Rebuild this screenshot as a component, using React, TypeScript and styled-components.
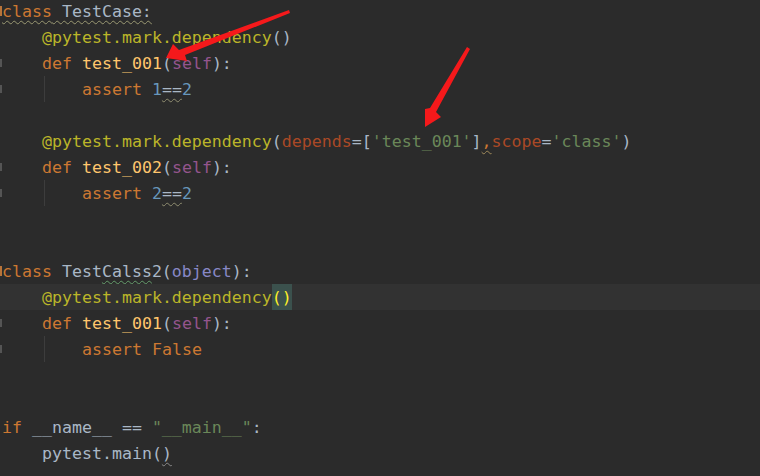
import React from 'react';
import styled, { createGlobalStyle, css } from 'styled-components';

const GlobalStyle = createGlobalStyle`
    html, body {
        margin: 0;
        padding: 0;
        background: #2b2b2b;
        overflow: hidden;
    }
`;

const colors = {
    plain: '#a9b7c6',
    kw: '#cc7832',
    deco: '#bbb529',
    fn: '#ffc66d',
    self: '#94558d',
    num: '#6897bb',
    str: '#6a8759',
    param: '#aa4926',
    builtin: '#8888c6',
};

type Kind = keyof typeof colors;

const Screen = styled.div`
    position: relative;
    width: 760px;
    height: 476px;
    overflow: hidden;
    background: #2b2b2b;
`;

const Editor = styled.div`
    display: flex;
    flex-direction: column;
    margin-top: -2px;
    font-family: 'DejaVu Sans Mono', 'Liberation Mono', monospace;
    font-size: 16.6px;
`;

const Line = styled.div<{ $current?: boolean }>`
    display: flex;
    align-items: stretch;
    height: 26px;
    background: ${p => (p.$current ? '#323232' : 'transparent')};
`;

const Marker = styled.span<{ $kind?: 'fold' | 'tick' }>`
    flex: 0 0 2px;
    align-self: center;
    height: ${p => (p.$kind === 'fold' ? '10px' : '8px')};
    background: ${p => (p.$kind === 'fold' ? '#b8743a' : p.$kind === 'tick' ? '#555555' : 'transparent')};
`;

const Indent = styled.span<{ $guide?: boolean }>`
    flex: 0 0 40px;
    ${p =>
        p.$guide &&
        css`
            background: linear-gradient(to right, transparent 2px, #3d3d3d 2px, #3d3d3d 3px, transparent 3px);
        `}
`;

const Text = styled.span`
    white-space: pre;
    line-height: 26px;
    padding-top: 1px;
`;

const Tok = styled.span<{ $k?: Kind; $wave?: string }>`
    color: ${p => colors[p.$k ?? 'plain']};
    ${p =>
        p.$wave &&
        css`
            text-decoration: underline wavy ${p.$wave};
            text-decoration-thickness: 1px;
            text-underline-offset: 3px;
            text-decoration-skip-ink: none;
        `}
`;

// matched brace pair, box covers the full row
const BraceMatch = styled.span`
    display: inline-block;
    vertical-align: top;
    margin-top: -1px;
    padding-top: 1px;
    height: 25px;
    line-height: 26px;
    background: #3b514d;
    color: #ffef28;
`;

const Arrows = styled.svg`
    position: absolute;
    left: 0;
    top: 0;
    pointer-events: none;
`;

const Blank = () => <Line />;

export default function App() {
    return (
        <Screen>
            <GlobalStyle />
            <Editor>
                <Line>
                    <Marker $kind="fold" />
                    <Text>
                        <Tok $wave="#9a9872"><Tok $k="kw">class</Tok> TestCase:</Tok>
                    </Text>
                </Line>
                <Line>
                    <Marker />
                    <Indent />
                    <Text>
                        <Tok $k="deco">@pytest.mark.dependency</Tok><Tok>()</Tok>
                    </Text>
                </Line>
                <Line>
                    <Marker $kind="tick" />
                    <Indent />
                    <Text>
                        <Tok $k="kw">def </Tok><Tok $k="fn">test_001</Tok><Tok>(</Tok><Tok $k="self">self</Tok><Tok>):</Tok>
                    </Text>
                </Line>
                <Line>
                    <Marker $kind="tick" />
                    <Indent />
                    <Indent $guide />
                    <Text>
                        <Tok $k="kw">assert </Tok><Tok $k="num">1</Tok><Tok $wave="#8f8d70">==</Tok><Tok $k="num">2</Tok>
                    </Text>
                </Line>
                <Blank />
                <Line>
                    <Marker />
                    <Indent />
                    <Text>
                        <Tok $k="deco">@pytest.mark.dependency</Tok><Tok>(</Tok><Tok $k="param">depends</Tok><Tok>=[</Tok>
                        <Tok $k="str">'test_001'</Tok><Tok>]</Tok><Tok $k="kw" $wave="#a08a5a">,</Tok>
                        <Tok $k="param">scope</Tok><Tok>=</Tok><Tok $k="str">'class'</Tok><Tok>)</Tok>
                    </Text>
                </Line>
                <Line>
                    <Marker $kind="tick" />
                    <Indent />
                    <Text>
                        <Tok $k="kw">def </Tok><Tok $k="fn">test_002</Tok><Tok>(</Tok><Tok $k="self">self</Tok><Tok>):</Tok>
                    </Text>
                </Line>
                <Line>
                    <Marker $kind="tick" />
                    <Indent />
                    <Indent $guide />
                    <Text>
                        <Tok $k="kw">assert </Tok><Tok $k="num">2</Tok><Tok $wave="#8f8d70">==</Tok><Tok $k="num">2</Tok>
                    </Text>
                </Line>
                <Blank />
                <Blank />
                <Line>
                    <Marker $kind="fold" />
                    <Text>
                        <Tok $k="kw">class </Tok><Tok>Test</Tok><Tok $wave="#659c6b">Calss</Tok><Tok>2(</Tok>
                        <Tok $k="builtin">object</Tok><Tok>):</Tok>
                    </Text>
                </Line>
                <Line $current>
                    <Marker />
                    <Indent />
                    <Text>
                        <Tok $k="deco">@pytest.mark.dependency</Tok><BraceMatch>()</BraceMatch>
                    </Text>
                </Line>
                <Line>
                    <Marker $kind="tick" />
                    <Indent />
                    <Text>
                        <Tok $k="kw">def </Tok><Tok $k="fn">test_001</Tok><Tok>(</Tok><Tok $k="self">self</Tok><Tok>):</Tok>
                    </Text>
                </Line>
                <Line>
                    <Marker $kind="tick" />
                    <Indent />
                    <Indent $guide />
                    <Text>
                        <Tok $k="kw">assert False</Tok>
                    </Text>
                </Line>
                <Blank />
                <Blank />
                <Line>
                    <Marker />
                    <Text>
                        <Tok $k="kw">if </Tok><Tok>__name__ == </Tok><Tok $k="str">"__main__"</Tok><Tok>:</Tok>
                    </Text>
                </Line>
                <Line>
                    <Marker />
                    <Indent />
                    <Text>
                        <Tok>pytest.main(</Tok><Tok $wave="#8a8a8a">)</Tok>
                    </Text>
                </Line>
            </Editor>
            <Arrows width={760} height={476} viewBox="0 0 760 476">
                <polygon points="289,10 290,13 185,55 187,61 166,58 173,44 179,50" fill="#f5191b" />
                <polygon points="467,47 470,49 436,112 441,117 425,127 425,109 430,108" fill="#f5191b" />
            </Arrows>
        </Screen>
    );
}
